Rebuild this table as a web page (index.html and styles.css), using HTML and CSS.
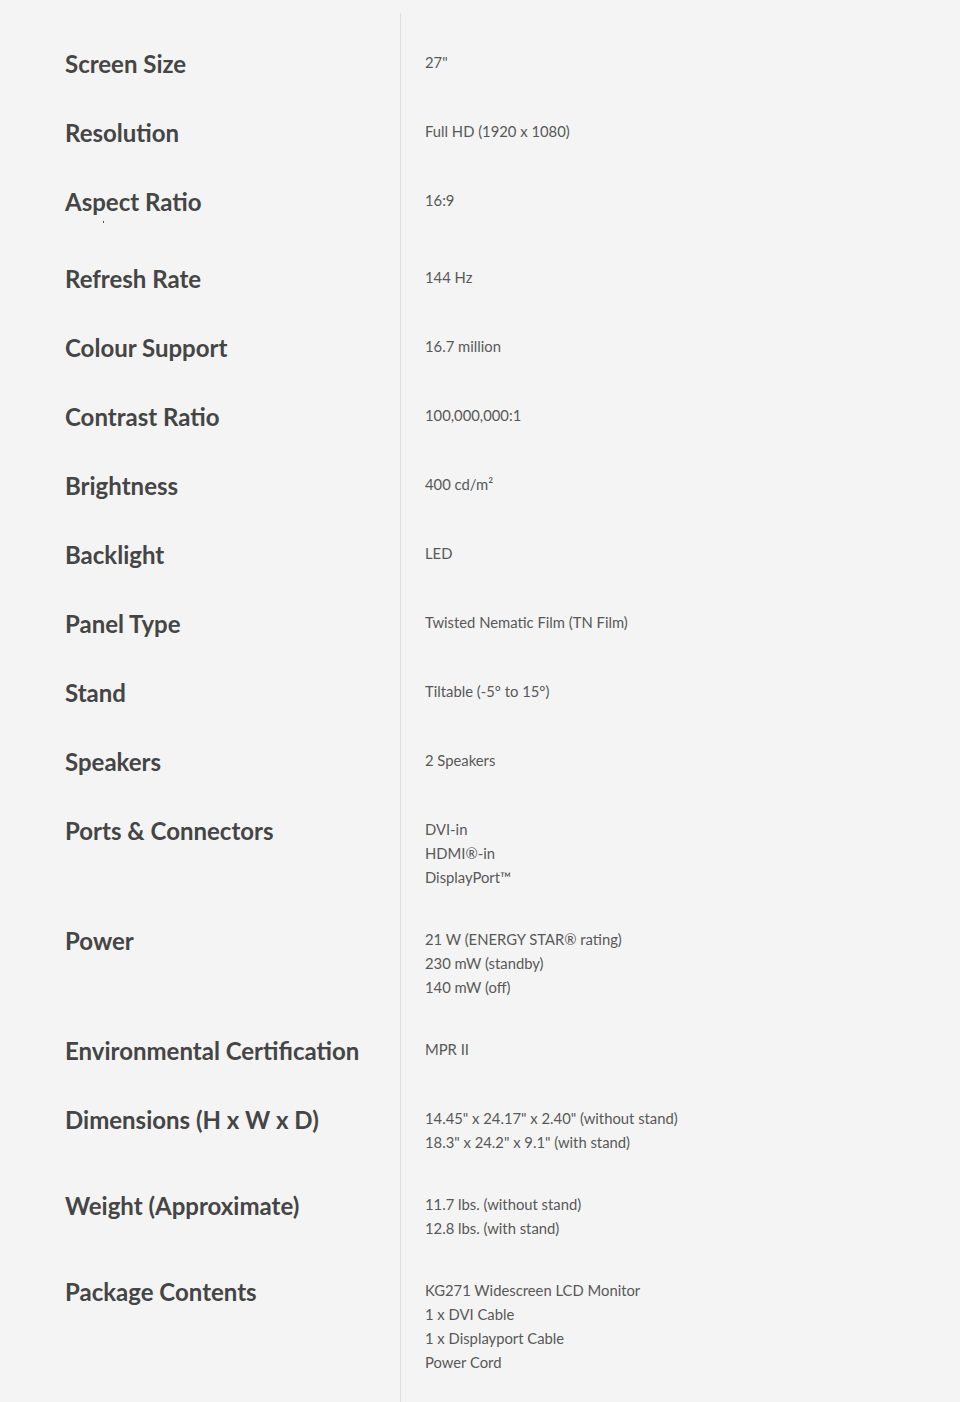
FILE: index.html
```html
<!DOCTYPE html>
<html lang="en">
<head>
<meta charset="utf-8">
<title>Specifications</title>
<link rel="stylesheet" href="styles.css">
</head>
<body>
<dl class="specs">
  <dt class="label">Screen Size</dt>
  <dd class="value">27"</dd>

  <dt class="label">Resolution</dt>
  <dd class="value">Full HD (1920 x 1080)</dd>

  <dt class="label">Aspect Ratio<span class="tick"></span></dt>
  <dd class="value">16:9</dd>

  <dt class="label">Refresh Rate</dt>
  <dd class="value">144 Hz</dd>

  <dt class="label">Colour Support</dt>
  <dd class="value">16.7 million</dd>

  <dt class="label">Contrast Ratio</dt>
  <dd class="value">100,000,000:1</dd>

  <dt class="label">Brightness</dt>
  <dd class="value">400 cd/m²</dd>

  <dt class="label">Backlight</dt>
  <dd class="value">LED</dd>

  <dt class="label">Panel Type</dt>
  <dd class="value">Twisted Nematic Film (TN Film)</dd>

  <dt class="label">Stand</dt>
  <dd class="value">Tiltable (-5° to 15°)</dd>

  <dt class="label">Speakers</dt>
  <dd class="value">2 Speakers</dd>

  <dt class="label">Ports &amp; Connectors</dt>
  <dd class="value">DVI-in<br>HDMI®-in<br>DisplayPort™</dd>

  <dt class="label">Power</dt>
  <dd class="value">21 W (ENERGY STAR® rating)<br>230 mW (standby)<br>140 mW (off)</dd>

  <dt class="label">Environmental Certification</dt>
  <dd class="value">MPR II</dd>

  <dt class="label">Dimensions (H x W x D)</dt>
  <dd class="value">14.45" x 24.17" x 2.40" (without stand)<br>18.3" x 24.2" x 9.1" (with stand)</dd>

  <dt class="label">Weight (Approximate)</dt>
  <dd class="value">11.7 lbs. (without stand)<br>12.8 lbs. (with stand)</dd>

  <dt class="label">Package Contents</dt>
  <dd class="value last">KG271 Widescreen LCD Monitor<br>1 x DVI Cable<br>1 x Displayport Cable<br>Power Cord</dd>
</dl>
</body>
</html>
```
FILE: styles.css
```css
html, body {
  margin: 0;
  padding: 0;
  background: #f4f4f4;
}

body {
  min-height: 1402px;
}

.specs {
  margin: 13px 0 0 0;
  padding: 0 0 0 65px;
  display: grid;
  grid-template-columns: 335px 1fr;
}

.label {
  margin: 0;
  padding: 19px 0 19px 0;
  font-family: "Lato", "Liberation Sans", sans-serif;
  font-weight: 700;
  font-size: 24px;
  line-height: 31px;
  color: #454545;
}

.value {
  margin: 0;
  padding: 21px 0 17px 24px;
  border-left: 1px solid #dedede;
  font-family: "Lato", "Liberation Sans", sans-serif;
  font-size: 14.8px;
  line-height: 24px;
  color: #585858;
}

.label:first-of-type {
  padding-top: 35px;
}

.value:first-of-type {
  padding-top: 37px;
}

.tick {
  display: block;
  height: 8px;
  position: relative;
}

.tick::after {
  content: "";
  position: absolute;
  left: 38px;
  top: 4px;
  width: 1px;
  height: 2px;
  background: #555;
}

.value.last {
  padding-bottom: 60px;
}
```
